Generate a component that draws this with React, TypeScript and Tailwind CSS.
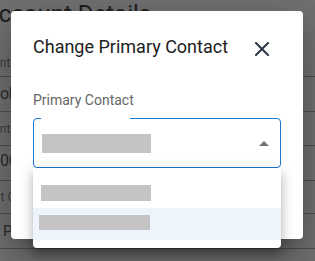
const Bar = ({ className }: { className: string }) => <div className={`bg-[#c4c4c4] ${className}`} />;

const ChangeContactDialog = () => {
  return (
    <div className="absolute left-[11px] top-[11px] w-[292px] h-[228px] bg-white rounded-[4px] shadow-[0_11px_15px_-7px_rgba(0,0,0,0.2),0_24px_38px_3px_rgba(0,0,0,0.14),0_9px_46px_8px_rgba(0,0,0,0.12)] pl-[22px] pr-[22px] pt-[24px]">
      <div className="flex items-start justify-between pr-[12px]">
        <h2 className="text-[18px] leading-[24px] text-[#212121]">Change Primary Contact</h2>
        <svg width="14" height="14" viewBox="0 0 14 14" className="mt-[7px] text-[#2d3748]">
          <path d="M1 1L13 13M13 1L1 13" stroke="currentColor" strokeWidth="2" strokeLinecap="square" fill="none" />
        </svg>
      </div>

      <div className="mt-[31px] text-[14px] leading-[20px] text-[#666666]">Primary Contact</div>

      <div className="relative mt-[8px]">
        <div className="h-[50px] border border-[#1976d2] rounded-[4px] flex items-center justify-between pl-[8px] pr-[11px]">
          <Bar className="w-[109px] h-[19px]" />
          <svg width="10" height="5" viewBox="0 0 10 5">
            <path d="M0 5L5 0L10 5Z" fill="#757575" />
          </svg>
        </div>
        <span className="absolute -top-px left-[8px] w-[89px] h-[2px] bg-white" />

        <div className="absolute left-0 top-full w-[248px] bg-white rounded-b-[4px] py-[8px] shadow-[0_5px_5px_-3px_rgba(0,0,0,0.2),0_8px_10px_1px_rgba(0,0,0,0.14),0_3px_14px_2px_rgba(0,0,0,0.12)]">
          <div className="h-[32px] pt-[9px] pl-[8px]">
            <Bar className="w-[110px] h-[16px]" />
          </div>
          <div className="h-[32px] pt-[7px] pl-[6px] bg-[#edf4fb]">
            <Bar className="w-[111px] h-[15px]" />
          </div>
        </div>
      </div>
    </div>
  );
};

const App = () => {
  return (
    <div className="relative w-[315px] h-[261px] overflow-hidden bg-[#717171] font-['Roboto',sans-serif]">
      <div className="flex flex-col">
        <h1 className="-mt-[2px] h-[32px] -ml-[17px] text-[24px] leading-[32px] text-[#1f1f1f] whitespace-nowrap">
          Account Details
        </h1>
        <div className="h-[47px] border-b border-[#4b5059] pt-[25px]">
          <span className="block -ml-[34px] text-[12px] leading-[16px] text-[#3e3e3e] whitespace-nowrap">Account Name</span>
        </div>
        <div className="h-[35px] border-b border-[#4b5059] flex items-center">
          <span className="-ml-[10px] text-[16px] leading-[20px] text-[#2b2b2b] whitespace-nowrap">Bob Smith</span>
        </div>
        <div className="h-[34px] border-b border-[#4b5059] pt-[9px]">
          <span className="block -ml-[34px] text-[12px] leading-[16px] text-[#3e3e3e] whitespace-nowrap">Account Type</span>
        </div>
        <div className="h-[35px] border-b border-[#4b5059] pt-[5px]">
          <span className="block -ml-[18px] text-[16px] leading-[20px] text-[#2b2b2b] whitespace-nowrap">2500.00</span>
        </div>
        <div className="h-[33px] border-b border-[#4b5059] flex items-center">
          <span className="-ml-[40px] text-[12px] leading-[16px] text-[#3e3e3e] whitespace-nowrap">Account Contact</span>
        </div>
        <div className="h-[35px] border-b border-[#4b5059] flex items-center">
          <span className="ml-[3px] text-[15px] leading-[20px] text-[#2b2b2b] whitespace-nowrap">Primary</span>
        </div>
      </div>

      <ChangeContactDialog />
    </div>
  );
};

export default App;
